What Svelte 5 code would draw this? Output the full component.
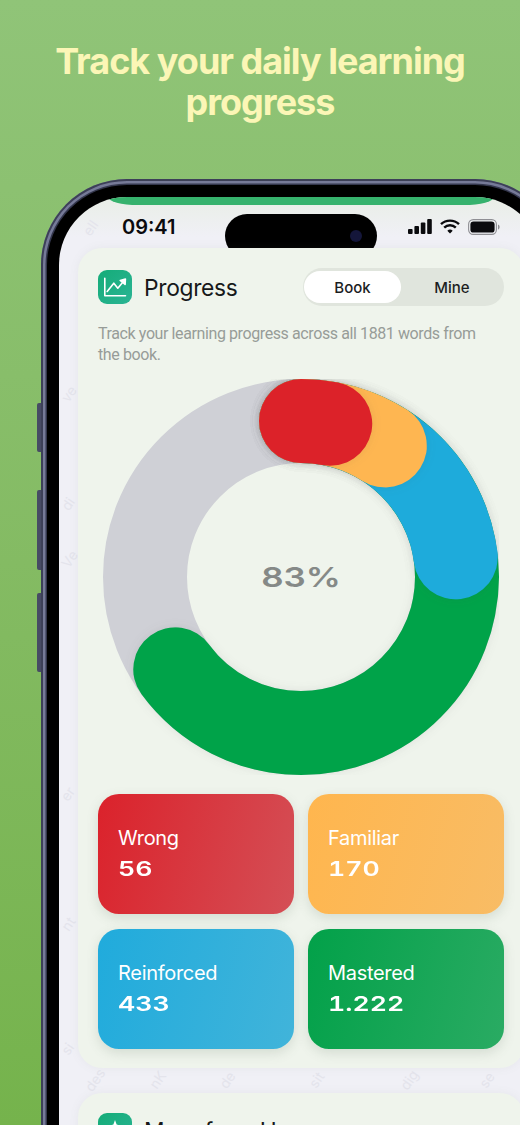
<script>
    const radius = 156;
    const circumference = 2 * Math.PI * radius;

    // drawn back to front, every arc starts at 12 o'clock
    const arcs = [
        { color: "#00a349", angle: 233.6 },
        { color: "#1eabdb", angle: 82.7 },
        { color: "#feb651", angle: 32.5 },
        { color: "#dc2229", angle: 10.8 },
    ];

    const stats = [
        { label: "Wrong", value: "56", kind: "wrong" },
        { label: "Familiar", value: "170", kind: "familiar" },
        { label: "Reinforced", value: "433", kind: "reinforced" },
        { label: "Mastered", value: "1.222", kind: "mastered" },
    ];

    const marks = [
        { word: "ell", x: 24, y: 24 },
        { word: "ve", x: 2, y: 190 },
        { word: "di", x: 3, y: 300 },
        { word: "Ve", x: 2, y: 355 },
        { word: "er", x: 2, y: 590 },
        { word: "nt", x: 3, y: 720 },
        { word: "si", x: 3, y: 845 },
        { word: "des", x: 24, y: 876 },
        { word: "nK", x: 90, y: 876 },
        { word: "de", x: 160, y: 876 },
        { word: "sit", x: 250, y: 876 },
        { word: "dig", x: 340, y: 876 },
        { word: "se", x: 420, y: 876 },
    ];
</script>

<div class="page">
    <h1>Track your daily learning<br />progress</h1>

    <div class="phone">
        <span class="side-button one"></span>
        <span class="side-button two"></span>
        <span class="side-button three"></span>

        <div class="bezel">
            <div class="screen">
                {#each marks as mark}
                    <span class="mark" style="left: {mark.x}px; top: {mark.y}px">{mark.word}</span>
                {/each}

                <div class="strip"></div>

                <div class="island"><span class="lens"></span></div>

                <div class="status">
                    <span class="time">09:41</span>
                    <div class="status-icons">
                        <svg width="24" height="15" viewBox="0 0 24 15" fill="#0b0b0e">
                            <rect x="0" y="10" width="4.6" height="5" rx="1" />
                            <rect x="6.4" y="7" width="4.6" height="8" rx="1" />
                            <rect x="12.8" y="3.6" width="4.6" height="11.4" rx="1" />
                            <rect x="19.2" y="0" width="4.6" height="15" rx="1" />
                        </svg>
                        <svg width="20" height="15" viewBox="0 0 20 15" fill="none" stroke="#0b0b0e" stroke-width="2.4">
                            <path d="M1 5.2a13 13 0 0 1 18 0" />
                            <path d="M4.2 8.6a8.4 8.4 0 0 1 11.6 0" />
                            <path d="M10 14.6 7.3 11.8a3.8 3.8 0 0 1 5.4 0z" fill="#0b0b0e" stroke="none" />
                        </svg>
                        <svg width="32" height="16" viewBox="0 0 32 16">
                            <rect x="0.6" y="0.6" width="27.8" height="14.8" rx="4.6" fill="none" stroke="#8f8f94" stroke-width="1.1" />
                            <rect x="2.4" y="2.4" width="24.2" height="11.2" rx="3.2" fill="#0b0b0e" />
                            <path d="M30 5.4c1.2.4 1.6 1.4 1.6 2.6s-.4 2.2-1.6 2.6z" fill="#8f8f94" />
                        </svg>
                    </div>
                </div>

                <section class="card">
                    <header class="card-head">
                        <div class="app-icon">
                            <svg width="26" height="26" viewBox="0 0 26 26" fill="none" stroke="#fff" stroke-width="1.6" stroke-linecap="round" stroke-linejoin="round">
                                <path d="M2.8 4.2v17.6h20.7" />
                                <path d="M5.2 17.5l6.6-8.3 4 5 6-7.2" />
                                <path d="M18.2 6.4l5.2-1.4-.3 5.4z" fill="#fff" />
                            </svg>
                        </div>
                        <h2>Progress</h2>
                        <div class="toggle">
                            <button class="active">Book</button>
                            <button>Mine</button>
                        </div>
                    </header>

                    <p class="intro">Track your learning progress across all 1881 words from the book.</p>

                    <div class="chart">
                        <svg width="396" height="396" viewBox="0 0 396 396" fill="none">
                            <circle cx="198" cy="198" r={radius} stroke="#cfd0d6" stroke-width="84" />
                            {#each arcs as arc}
                                <circle
                                    class="arc"
                                    cx="198"
                                    cy="198"
                                    r={radius}
                                    stroke={arc.color}
                                    stroke-width="84"
                                    stroke-linecap="round"
                                    stroke-dasharray="{(arc.angle / 360) * circumference} {circumference}"
                                    transform="rotate(-90 198 198)"
                                />
                            {/each}
                        </svg>
                        <span class="percent">83%</span>
                    </div>

                    <div class="stats">
                        {#each stats as stat}
                            <div class="stat {stat.kind}">
                                <span class="stat-label">{stat.label}</span>
                                <span class="stat-value">{stat.value}</span>
                            </div>
                        {/each}
                    </div>
                </section>

                <section class="card more">
                    <header class="card-head">
                        <div class="app-icon">
                            <svg width="26" height="26" viewBox="0 0 26 26" fill="#fff">
                                <path d="M13 3l1.6 4.4L19 9l-4.4 1.6L13 15l-1.6-4.4L7 9l4.4-1.6z" />
                            </svg>
                        </div>
                        <h2>More from Hero</h2>
                    </header>
                </section>
            </div>
        </div>
    </div>
</div>

<style>
    :global(body) {
        margin: 0;
    }

    .page {
        height: 1125px;
        overflow: hidden;
        background: linear-gradient(180deg, #90c478 0%, #84bb63 50%, #75b34c 100%);
        font-family: Inter, "Liberation Sans", sans-serif;
    }

    h1 {
        margin: 0;
        padding: 41px 0 56px;
        font-size: 36px;
        line-height: 41px;
        font-weight: 700;
        letter-spacing: -1px;
        text-align: center;
        color: #fbf6b6;
    }

    .phone {
        position: relative;
        width: 520px;
        height: 1100px;
        margin-left: 41px;
        box-sizing: border-box;
        padding: 6px;
        border-radius: 86px;
        background: #767a98;
        box-shadow: inset 0 0 0 2px #3d4058;
    }

    .side-button {
        position: absolute;
        left: -4px;
        width: 4px;
        border-radius: 2px 0 0 2px;
        background: #474b64;
    }

    .side-button.one {
        top: 224px;
        height: 49px;
    }

    .side-button.two {
        top: 311px;
        height: 80px;
    }

    .side-button.three {
        top: 414px;
        height: 79px;
    }

    .bezel {
        height: 100%;
        box-sizing: border-box;
        padding: 12px;
        border-radius: 80px;
        background: #000;
        box-shadow: 0 0 0 1.5px #33364c;
    }

    .screen {
        position: relative;
        height: 100%;
        overflow: hidden;
        border-radius: 68px;
        background: linear-gradient(180deg, #e9eee6 0, #f0f0f6 40px);
    }

    .mark {
        position: absolute;
        font-size: 14px;
        line-height: 1;
        color: #e4e4ec;
        transform: rotate(-55deg);
    }

    .strip {
        height: 8px;
        margin: 0 49px;
        border-radius: 0 0 30px 30px / 0 0 8px 8px;
        background: #36b26d;
    }

    .island {
        position: absolute;
        top: 17px;
        left: 166px;
        width: 152px;
        height: 44px;
        border-radius: 22px;
        background: #000;
    }

    .lens {
        position: absolute;
        top: 16px;
        right: 15px;
        width: 12px;
        height: 12px;
        border-radius: 50%;
        background: #14163a;
    }

    .status {
        position: relative;
        height: 43px;
        display: flex;
        align-items: center;
        justify-content: space-between;
        padding: 0 43px 0 63px;
        box-sizing: border-box;
    }

    .time {
        font-size: 20px;
        font-weight: 600;
        color: #0b0b0e;
    }

    .status-icons {
        display: flex;
        align-items: center;
        gap: 8px;
    }

    .card {
        position: relative;
        margin: 0 19px;
        padding: 20px 20px 19px;
        border-radius: 24px;
        background: #eff4ec;
        box-shadow: 0 0 10px rgba(120, 130, 110, 0.08);
    }

    .card.more {
        margin-top: 25px;
        padding-top: 18px;
    }

    .card-head {
        display: flex;
        align-items: center;
        height: 38px;
    }

    .app-icon {
        width: 34px;
        height: 34px;
        flex: none;
        display: flex;
        align-items: center;
        justify-content: center;
        border-radius: 9px;
        background: linear-gradient(135deg, #14ac78, #2bb494);
    }

    h2 {
        margin: 1px 0 0 12px;
        font-size: 22.8px;
        font-weight: 400;
        color: #16181a;
        letter-spacing: -0.3px;
    }

    .toggle {
        display: flex;
        width: 201px;
        height: 38px;
        box-sizing: border-box;
        margin-left: auto;
        padding: 3px 1px;
        border-radius: 19px;
        background: #e0e5dd;
    }

    .toggle button {
        flex: 1;
        padding: 0;
        border: none;
        border-radius: 16px;
        background: transparent;
        font: 500 15px Inter, "Liberation Sans", sans-serif;
        color: #1c1e1f;
    }

    .toggle button.active {
        flex: 0 0 97px;
        background: #fff;
    }

    .intro {
        max-width: 390px;
        margin: 17px 0 14px;
        font-family: Roboto, "Liberation Sans", sans-serif;
        font-size: 16px;
        line-height: 21px;
        letter-spacing: -0.4px;
        color: #979c98;
    }

    .chart {
        position: relative;
        width: 396px;
        height: 396px;
        margin: 0 0 19px 5px;
    }

    .arc {
        filter: drop-shadow(0 0 5px rgba(60, 60, 60, 0.1));
    }

    .percent {
        position: absolute;
        top: 50%;
        left: 50%;
        transform: translate(-50%, -50%) scaleX(1.27);
        font-size: 27.5px;
        font-weight: 600;
        color: #858987;
    }

    .stats {
        display: grid;
        grid-template-columns: 196px 196px;
        grid-auto-rows: 120px;
        gap: 15px 14px;
    }

    .stat {
        display: flex;
        flex-direction: column;
        justify-content: center;
        gap: 7px;
        padding: 0 20px 1px;
        border-radius: 21px;
        color: #fff;
        box-shadow: 0 4px 12px rgba(90, 110, 90, 0.18);
    }

    .stat-label {
        font-size: 20px;
        letter-spacing: -0.3px;
    }

    .stat-value {
        font-size: 20.5px;
        font-weight: 600;
        font-variant-numeric: tabular-nums;
        line-height: 24px;
        transform: scaleX(1.3);
        transform-origin: left;
    }

    .wrong {
        background: linear-gradient(105deg, #db222b, #d44f56);
    }

    .familiar {
        background: linear-gradient(105deg, #ffb64e, #f8bc65);
    }

    .reinforced {
        background: linear-gradient(105deg, #20abdc, #41b4da);
    }

    .mastered {
        background: linear-gradient(105deg, #02a149, #2aab63);
    }
</style>
